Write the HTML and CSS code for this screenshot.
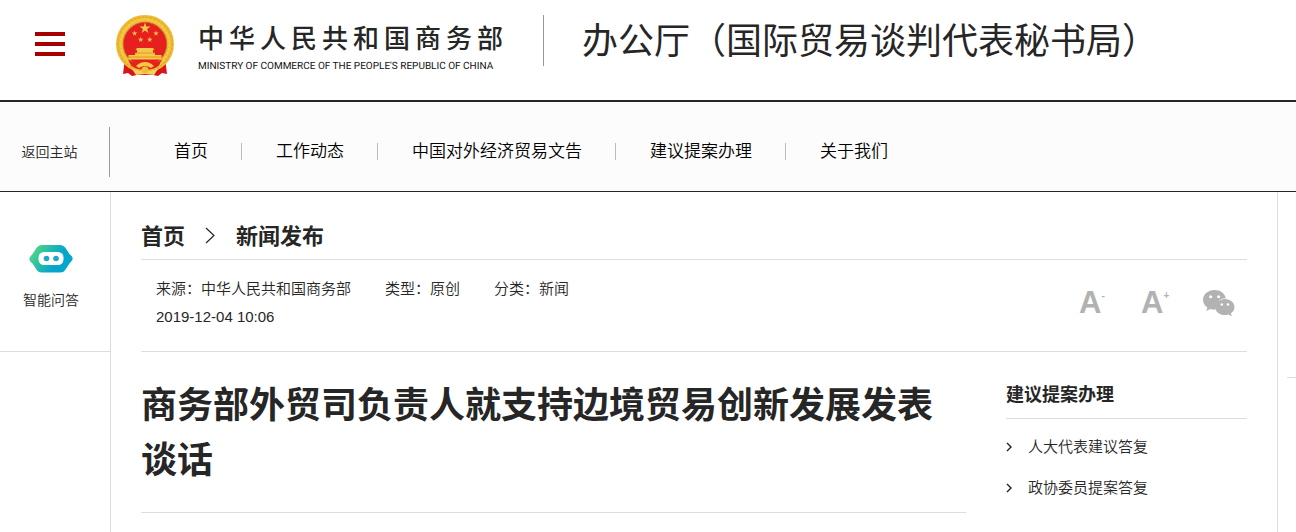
FILE: index.html
```html
<!DOCTYPE html>
<html lang="zh-CN">
<head>
<meta charset="utf-8">
<title>商务部外贸司负责人就支持边境贸易创新发展发表谈话</title>
<link rel="stylesheet" href="styles.css">
</head>
<body>
<header class="header">
  <button class="menu" type="button" aria-label="菜单"><span></span><span></span><span></span></button>
  <a class="brand" href="#">
    <svg class="emblem" viewBox="0 0 58 62" aria-hidden="true">
      <path d="M9 43 7 59l5-1 4 3 5-1h16l5 1 4-3 5 1-2-16z" fill="#d9141b"/>
      <path d="M10 47l5 8M48 47l-5 8M13 45l7 11M45 45l-7 11" stroke="#a50c12" stroke-width="1.3"/>
      <circle cx="29" cy="29" r="25.3" fill="none" stroke="#eebc34" stroke-width="7.4"/>
      <circle cx="29" cy="29" r="27" fill="none" stroke="#e2a92a" stroke-width="1.4" stroke-dasharray="2 2"/>
      <circle cx="29" cy="29" r="24.500" fill="none" stroke="#f5cf50" stroke-width="1.6" stroke-dasharray="3 1"/>
      <circle cx="29" cy="29" r="21.7" fill="#e5201f" stroke="#b9621a" stroke-width=".8"/>
      <g fill="#f5c84a">
        <path id="star" d="M29 7.500l1.300 4h4.200l-3.400 2.500 1.300 4-3.400-2.500-3.400 2.500 1.300-4-3.400-2.500h4.200z"/>
        <use href="#star" transform="translate(4.100 11.700) scale(.5)"/>
        <use href="#star" transform="translate(25.500 11.700) scale(.5)"/>
        <use href="#star" transform="translate(10.200 18) scale(.5)"/>
        <use href="#star" transform="translate(19.300 18) scale(.5)"/>
        <path d="M21 33h16l1.500 2H37v3h2v2h6.500v4.500h-33V40H19v-2h2v-3h-1.500z"/>
      </g>
      <path d="M19 38h20M12 42h34" stroke="#d88b1c" stroke-width=".8"/>
      <path d="M12 44.500q8 5 14 4l3-3 3 3q6 1 14-4l-3 6q-5 4-11 4l-3-3-3 3q-6 0-11-4z" fill="#e5201f"/>
      <path d="M20 51q4-4 9-4t9 4l-3 2q-6-4-12 0z" fill="#f3c744"/>
      <path d="M16 54l9 2 4-4 4 4 9-2-4 6-9-1-9 1z" fill="#f6d260"/>
      <circle cx="29" cy="55" r="3.500" fill="#efbd35"/>
    </svg>
    <span class="brand-text">
      <span class="brand-cn">中华人民共和国商务部</span>
      <span class="brand-en" lang="en">MINISTRY OF COMMERCE OF THE PEOPLE'S REPUBLIC OF CHINA</span>
    </span>
  </a>
  <div class="office">办公厅（国际贸易谈判代表秘书局）</div>
</header>

<div class="navbar">
  <a class="back" href="#">返回主站</a>
  <nav class="nav">
    <a href="#">首页</a>
    <a href="#">工作动态</a>
    <a href="#">中国对外经济贸易文告</a>
    <a href="#">建议提案办理</a>
    <a href="#">关于我们</a>
  </nav>
</div>

<div class="page">
  <aside class="rail">
    <a class="bot" href="#">
      <svg class="bot-icon" viewBox="0 0 44 28" aria-hidden="true">
        <defs><linearGradient id="bot" x1="0" y1="0" x2="1" y2=".4"><stop offset=".1" stop-color="#4fd880"/><stop offset=".75" stop-color="#06a6cc"/></linearGradient></defs>
        <path d="M12.500 0h19q3 0 4.700 2.500l4.300 6.500 2.300 2.200q1.700 2.300 0 4.600L40.500 18.500l-4.300 6.500Q34.500 27.500 31.500 27.500h-19Q9.500 27.500 7.800 25L3.500 18.500 1.200 16.300q-1.700-2.300 0-4.600L3.500 9 7.800 2.500Q9.500 0 12.500 0z" fill="url(#bot)"/>
        <rect x="9.500" y="7" width="25" height="13" rx="5.500" fill="#fff"/>
        <circle cx="17.500" cy="13.500" r="2.800" fill="#1ba9c4"/><circle cx="27" cy="13.500" r="2.800" fill="#1ba9c4"/>
      </svg>
      <span>智能问答</span>
    </a>
  </aside>

  <main class="main">
    <nav class="crumbs" aria-label="当前位置">
      <a href="#">首页</a>
      <svg class="crumb-arrow" viewBox="0 0 11 17" aria-hidden="true"><path d="M1 1l8 7.500-8 7.500" fill="none" stroke="#262626" stroke-width="1.200"/></svg>
      <a href="#">新闻发布</a>
    </nav>
    <div class="info">
      <div class="meta">
        <span>来源：中华人民共和国商务部</span>
        <span>类型：原创</span>
        <span>分类：新闻</span>
        <time class="date" datetime="2019-12-04T10:06">2019-12-04 10:06</time>
      </div>
      <div class="tools">
        <button class="tool" type="button" aria-label="缩小字体">A<sup>-</sup></button>
        <button class="tool" type="button" aria-label="放大字体">A<sup>+</sup></button>
        <button class="tool" type="button" aria-label="微信">
          <svg class="wechat" viewBox="0 0 32 27" aria-hidden="true">
            <path d="M11.500 0C5 0 0 4.300 0 9.800c0 3.200 1.700 5.900 4.400 7.700L3.300 21l4-2.100q2 .7 4.500.7h1C12 13 16.500 8.200 22.800 8.200C22 3.500 17.300 0 11.500 0z" fill="#b2b2b2"/>
            <path d="M22 9c-5.500 0-9.700 3.600-9.700 8.200S16.500 25 22 25q1.900 0 3.500-.5l3.300 1.800-.9-3c2.200-1.500 3.600-3.700 3.600-6.100C31.500 12.600 27.300 9 22 9z" fill="#b2b2b2"/>
            <g fill="#fff"><circle cx="7.700" cy="6.800" r="1.500"/><circle cx="15.600" cy="6.800" r="1.500"/><circle cx="18.800" cy="14.500" r="1.300"/><circle cx="25" cy="14.500" r="1.300"/></g>
          </svg>
        </button>
      </div>
    </div>
    <div class="content">
      <article class="article">
        <h1 class="title">商务部外贸司负责人就支持边境贸易创新发展发表谈话</h1>
      </article>
      <aside class="side">
        <h2 class="side-title">建议提案办理</h2>
        <ul class="links">
          <li><svg class="link-arrow" viewBox="0 0 6 10" aria-hidden="true"><path d="M1 1l4 4-4 4" fill="none" stroke="#222" stroke-width="1.400"/></svg><a href="#">人大代表建议答复</a></li>
          <li><svg class="link-arrow" viewBox="0 0 6 10" aria-hidden="true"><path d="M1 1l4 4-4 4" fill="none" stroke="#222" stroke-width="1.400"/></svg><a href="#">政协委员提案答复</a></li>
        </ul>
      </aside>
    </div>
  </main>
  <div class="edge"></div>
</div>
</body>
</html>
```
FILE: styles.css
```css
* { box-sizing: border-box; }
body {
  margin: 0;
  min-height: 100vh;
  display: flex;
  flex-direction: column;
  overflow-x: hidden;
  background: #fff;
  color: #262626;
  font-family: "Liberation Sans", "Noto Sans CJK SC", sans-serif;
  font-size: 15px;
  font-weight: 350;
}
a { color: inherit; text-decoration: none; }
button { border: 0; padding: 0; background: none; cursor: pointer; font-family: inherit; }

.header {
  display: flex;
  align-items: flex-start;
  height: 102px;
  padding: 15px 35px 0;
  border-bottom: 2px solid #25252a;
  white-space: nowrap;
}
.menu { display: flex; flex-direction: column; gap: 6px; width: 30px; margin-top: 17px; }
.menu span { height: 4px; background: #a80000; }
.brand { display: flex; margin-left: 51px; }
.emblem { width: 58px; height: 62px; }
.brand-text { display: flex; flex-direction: column; width: 311px; margin-left: 24px; }
.brand-cn { font-size: 26px; line-height: 32px; padding-top: 8px; letter-spacing: 5px; font-weight: 500; }
.brand-en { font-family: Roboto, "Liberation Sans", sans-serif; font-size: 10px; font-weight: 400; line-height: 12px; padding-top: 6px; color: #111; text-rendering: geometricPrecision; }
.office {
  height: 51px;
  margin-left: 34px;
  padding-left: 38px;
  border-left: 1px solid #999;
  font-size: 36px;
  font-weight: 400;
  line-height: 54px;
}

.navbar {
  display: flex;
  align-items: center;
  height: 90px;
  padding-top: 10px;
  border-bottom: 1px solid #262626;
  background: #fcfcfc;
  white-space: nowrap;
}
.back { width: 110px; line-height: 50px; text-align: center; padding-right: 10px; border-right: 1px solid #999; font-size: 14px; }
.nav { display: flex; margin-left: 30px; color: #000; font-size: 17px; }
.nav a { display: flex; align-items: center; line-height: 24px; padding-left: 34px; }
.nav a:not(:last-child)::after { content: ""; width: 1px; height: 17px; margin-left: 33px; background: #bbb; }

.page { flex: 1; display: grid; grid-template-columns: 111px minmax(0, 1fr) 18px; }
.rail { border-right: 1px solid #ddd; }
.bot {
  display: flex;
  flex-direction: column;
  align-items: center;
  height: 160px;
  padding: 53px 8px 0 0;
  border-bottom: 1px solid #ddd;
  font-size: 14px;
  line-height: 20px;
}
.bot-icon { width: 44px; height: 28px; margin-bottom: 17px; }

.main { padding: 0 30px; border-right: 1px solid #ddd; }
.crumbs {
  display: flex;
  align-items: center;
  gap: 20px;
  height: 68px;
  padding-top: 16px;
  border-bottom: 1px solid #ddd;
  font-size: 22px;
  font-weight: bold;
}
.crumb-arrow { width: 11px; height: 17px; margin-top: 4px; }
.info { display: flex; justify-content: space-between; height: 92px; padding: 15px 12px 0 15px; border-bottom: 1px solid #ddd; }
.meta { display: flex; flex-wrap: wrap; align-content: flex-start; column-gap: 34px; line-height: 28px; }
.date { flex-basis: 100%; }
.tools { display: grid; grid-template-columns: 62px 62px 32px; align-items: center; height: 56px; }
.tool { display: flex; color: #b2b2b2; font-size: 31px; font-weight: bold; line-height: 34px; }
.tool sup { font-size: 10px; line-height: 20px; font-weight: bold; }
.wechat { width: 32px; height: 27px; }

.content { display: grid; grid-template-columns: minmax(0, 1fr) 241px; gap: 40px; align-items: start; }
.title { margin: 0; padding: 26px 0 24px; border-bottom: 1px solid #ddd; font-size: 36px; line-height: 55px; }
.side-title { margin: 0; padding: 30px 0 10px; border-bottom: 1px solid #ddd; font-size: 18px; line-height: 26px; }
.links { margin: 0; padding: 7px 0 0; list-style: none; }
.links li { display: flex; align-items: center; gap: 16px; line-height: 41px; }
.link-arrow { width: 6px; height: 10px; }
.edge { height: 186px; margin-left: 9px; border-bottom: 1px solid #ddd; }
```
